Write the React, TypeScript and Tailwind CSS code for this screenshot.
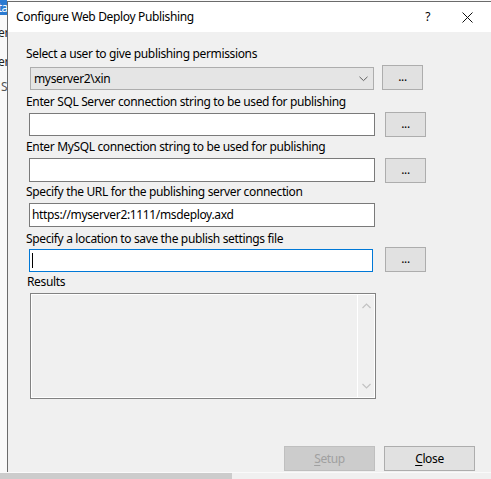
import React from "react";

const font = { fontFamily: '"Segoe UI", "Noto Sans", "Open Sans", sans-serif' };

function Dots({ className }: { className: string }) {
  return (
    <div className={`flex items-center justify-center border border-[#adadad] bg-[#e1e1e1] text-[12px] leading-[16px] text-black ${className}`}>
      <span className="-mt-[2px]">...</span>
    </div>
  );
}

function Label({ text, className = "" }: { text: string; className?: string }) {
  return (
    <div className={`ml-[18px] h-[16px] whitespace-nowrap text-[12px] leading-[16px] text-black ${className}`}>{text}</div>
  );
}

export default function App() {
  return (
    <div className="relative flex h-[479px] w-[491px] flex-col overflow-hidden bg-[#f9f9f9] tracking-[-0.35px]" style={font}>
      <div className="flex h-[472px]">
        {/* background app strip */}
        <div className="flex w-[7px] flex-col overflow-hidden text-[12px] leading-[16px]">
          <div className="flex h-[15px] justify-end bg-[#2a7ad1] text-white whitespace-nowrap">
            <span className="-mr-[1px]">Data</span>
          </div>
          <div className="mt-[10px] flex h-[16px] justify-end whitespace-nowrap text-[#222]">
            <span className="-mr-[2px]">Server</span>
          </div>
          <div className="mt-[13px] flex h-[16px] justify-end whitespace-nowrap text-[#222]">
            <span className="-mr-[2px]">Server</span>
          </div>
          <div className="mt-[9px] flex h-[16px] whitespace-nowrap text-[#555]">
            <span className="ml-[1px]">S</span>
          </div>
        </div>
        {/* dialog */}
        <div className="mt-[1px] flex flex-1 flex-col border-l border-t border-[#6b6b6b]">
          <div className="flex h-[30px] items-center bg-white pl-[8px] text-[12px] leading-[16px] text-black">
            <span className="flex-1 whitespace-nowrap">Configure Web Deploy Publishing</span>
            <span className="mr-[32px] -mt-[1px]">?</span>
            <svg width="11" height="11" viewBox="0 0 11 11" className="mr-[18px]">
              <path d="M0.5 0.5 L10.5 10.5 M10.5 0.5 L0.5 10.5" stroke="#111" strokeWidth="1" />
            </svg>
          </div>
          <div className="flex flex-1 flex-col bg-[#f0f0f0]">
            <Label text="Select a user to give publishing permissions" className="mt-[14px]" />
            <div className="mt-[3px] flex h-[25px] items-end">
              <div className="ml-[22px] flex h-[23px] w-[344px] items-center border border-[#adadad] bg-[#e5e5e5] pl-[3px] text-[12px] leading-[16px] text-black">
                <span className="flex-1">myserver2\xin</span>
                <svg width="9" height="6" viewBox="0 0 9 6" className="mr-[5px]">
                  <path d="M0.5 0.8 L4.5 4.6 L8.5 0.8" fill="none" stroke="#606060" strokeWidth="1" />
                </svg>
              </div>
              <Dots className="ml-[8px] h-[25px] w-[41px]" />
            </div>

            <Label text="Enter SQL Server connection string to be used for publishing" className="mt-[4px]" />
            <div className="mt-[2px] flex h-[25px] items-center">
              <div className="ml-[21px] h-[23px] w-[346px] border border-[#7a7a7a] bg-white" />
              <Dots className="ml-[10px] h-[25px] w-[41px]" />
            </div>

            <Label text="Enter MySQL connection string to be used for publishing" className="mt-[2px]" />
            <div className="mt-[3px] flex h-[25px] items-start">
              <div className="ml-[21px] h-[24px] w-[346px] border border-[#7a7a7a] bg-white" />
              <Dots className="ml-[10px] h-[25px] w-[41px]" />
            </div>

            <Label text="Specify the URL for the publishing server connection" className="mt-[1px]" />
            <div className="mt-[3px] flex h-[24px]">
              <div className="ml-[21px] flex h-[24px] w-[346px] items-center border border-[#7a7a7a] bg-white pl-[2px] text-[12px] leading-[16px] text-black">
                https://myserver2:1111/msdeploy.axd
              </div>
            </div>

            <Label text="Specify a location to save the publish settings file" className="mt-[4px]" />
            <div className="flex h-[25px] items-end">
              <div className="ml-[21px] flex h-[23px] w-[344px] items-center border border-[#0078d7] bg-white pl-[2px]">
                <div className="h-[15px] w-[1px] bg-black" />
              </div>
              <Dots className="ml-[12px] h-[25px] w-[41px]" />
            </div>

            <Label text="Results" className="mt-[2px] ml-[19px]" />
            <div className="mt-[3px] ml-[22px] flex h-[106px] w-[346px] border border-[#828282] bg-[#f0f0f0]">
              <div className="flex flex-1 border border-white">
                <div className="flex-1" />
                <div className="flex w-[17px] flex-col items-center justify-between border-l border-white py-[8px]">
                  <svg width="9" height="6" viewBox="0 0 9 6">
                    <path d="M0.5 5 L4.5 1 L8.5 5" fill="none" stroke="#c2c2c2" strokeWidth="1.2" />
                  </svg>
                  <svg width="9" height="6" viewBox="0 0 9 6">
                    <path d="M0.5 1 L4.5 5 L8.5 1" fill="none" stroke="#c2c2c2" strokeWidth="1.2" />
                  </svg>
                </div>
              </div>
            </div>

            <div className="mt-[47px] flex h-[25px]">
              <div className="ml-[276px] flex h-[25px] w-[91px] items-center justify-center border border-[#bfbfbf] bg-[#cccccc] text-[12px] leading-[16px] text-[#a0a0a0]">
                <span><span className="underline underline-offset-2">S</span>etup</span>
              </div>
              <div className="ml-[9px] flex h-[25px] w-[91px] items-center justify-center border border-[#adadad] bg-[#e1e1e1] text-[12px] leading-[16px] text-black">
                <span><span className="underline underline-offset-2">C</span>lose</span>
              </div>
            </div>
          </div>
        </div>
      </div>
      <div className="h-[1px] bg-[#fafafa]" />
      <div className="flex h-[6px]">
        <div className="w-[232px] bg-[#cccccc]" />
        <div className="flex-1 bg-[#f0f0f0]" />
      </div>
    </div>
  );
}
